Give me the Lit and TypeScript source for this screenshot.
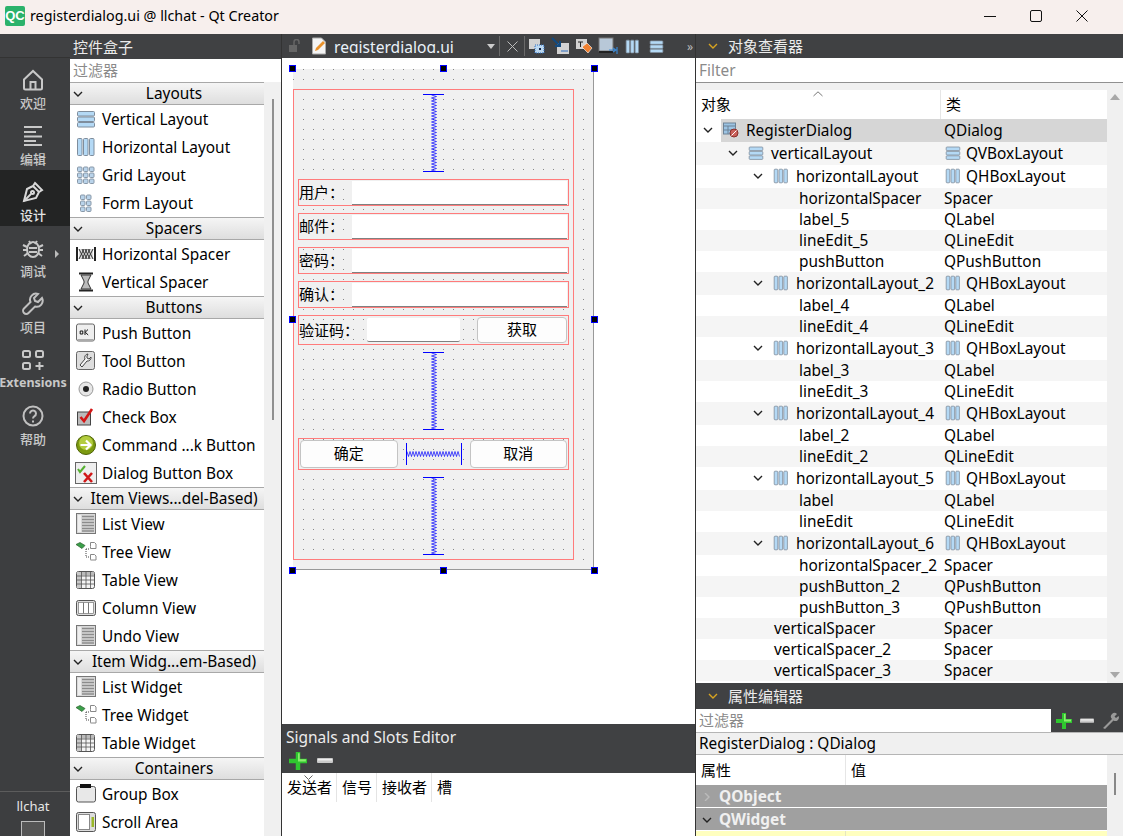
import { css, html, LitElement, svg } from "lit";
import { customElement } from "lit/decorators.js";

// ---- icons ----
const vbox = (s = 20) => html`<svg width="${s}" height="${s}" viewBox="0 0 20 20">
  <rect x="1.5" y="2.5" width="17" height="4.5" rx="1" fill="#b4d9f5" stroke="#7f8d9c" />
  <rect x="1.5" y="8" width="17" height="4.5" rx="1" fill="#b4d9f5" stroke="#7f8d9c" />
  <rect x="1.5" y="13.5" width="17" height="4.5" rx="1" fill="#b4d9f5" stroke="#7f8d9c" />
</svg>`;
const hbox = (s = 20) => html`<svg width="${s}" height="${s}" viewBox="0 0 20 20">
  <rect x="1.5" y="1.5" width="4.5" height="17" rx="1" fill="#b4d9f5" stroke="#7f8d9c" />
  <rect x="7.5" y="1.5" width="4.5" height="17" rx="1" fill="#b4d9f5" stroke="#7f8d9c" />
  <rect x="13.5" y="1.5" width="4.5" height="17" rx="1" fill="#b4d9f5" stroke="#7f8d9c" />
</svg>`;
const cells = (cols: number[], rows: number[]) => html`<svg width="20" height="20" viewBox="0 0 20 20">
  ${rows.map((y) =>
    cols.map((x) => svg`<rect x="${x}" y="${y}" width="4.5" height="4.5" rx="1" fill="#b9d3ea" stroke="#8898a8" />`)
  )}
</svg>`;
const listIcon = () => html`<svg width="20" height="22" viewBox="0 0 20 22">
  <rect x=".5" y=".5" width="19" height="20" fill="#d9d9d9" stroke="#777" />
  <rect x="2" y="2" width="3" height="17" fill="#efefef" />
  <path d="M6 3.5h12M6 6.5h12M6 9.5h12M6 12.5h12M6 15.5h12M6 18h12" stroke="#8c8c8c" stroke-width="1.6" />
</svg>`;
const treeIcon = () => html`<svg width="22" height="20" viewBox="0 0 22 20">
  <path d="M1 2.5l4-2 5 3-3 3z" fill="#3aa04a" stroke="#2e5e2e" stroke-width=".7" />
  <path d="M11 7h4M11 7v8h4" stroke="#444" stroke-dasharray="1 1" fill="none" />
  <path d="M15.5 4.5V.5h4l1.5 1.5v4.5h-5.500zM15.500 17.500v-5h4l1.500 1.500v4h-5.500z" fill="#fff" stroke="#888" />
</svg>`;
const tableIcon = () => html`<svg width="20" height="20" viewBox="0 0 20 20">
  <rect x=".5" y="1.5" width="18" height="17" rx="2" fill="#f4f4f4" stroke="#555" />
  <rect x="1" y="2" width="17" height="3.500" fill="#bbb" />
  <rect x="1" y="2" width="4" height="16" fill="#c8c8c8" />
  <path d="M5.500 2v16M10 2v16M14.500 2v16M1 6h17M1 10h17M1 14h17" stroke="#555" stroke-width=".8" />
</svg>`;
const columnIcon = () => html`<svg width="20" height="20" viewBox="0 0 20 20">
  <rect x=".5" y="2.500" width="19" height="15" rx="2" fill="#ddd" stroke="#555" />
  <rect x="2.500" y="4.500" width="15" height="11" fill="#fff" stroke="#777" stroke-width=".7" />
  <path d="M7.500 4.500v11M12.500 4.500v11" stroke="#777" />
</svg>`;
const icons: Record<string, () => unknown> = {
  v: () => vbox(),
  h: () => hbox(),
  grid: () => cells([1.5, 7.5, 13.5], [2, 8, 14]),
  form: () => cells([4.5, 10.5], [2, 8, 14]),
  hspacer: () => html`<svg width="20" height="16" viewBox="0 0 20 16">
    <path d="M1 1v14M19 1v14" stroke="#222" stroke-width="2" />
    <path d="M3 3h14v10H3z" fill="#ddd" />
    <path d="M3 13l5-10M6 13l5-10M9 13l5-10M12 13l5-10M3 3l5 10M6 3l5 10M9 3l5 10M12 3l5 10" stroke="#333" stroke-width="1" />
  </svg>`,
  vspacer: () => html`<svg width="20" height="20" viewBox="0 0 20 20">
    <path d="M3 1.500h14M3 18.500h14" stroke="#222" stroke-width="2" />
    <path d="M5 3l10 0-3 6v2l3 6H5l3-6V9z" fill="#bbb" stroke="#333" stroke-width="1" />
  </svg>`,
  push: () => html`<svg width="20" height="20" viewBox="0 0 20 20">
    <rect x=".5" y="1" width="18" height="17" rx="2" fill="#eee" stroke="#666" />
    <rect x="1.500" y="16" width="16" height="2" fill="#aaa" />
    <path d="M4.200 8h2.600v3H4.200zM9 6.500V12M12 6.500 9.300 9.200 12.200 12" fill="none" stroke="#111" />
  </svg>`,
  tool: () => html`<svg width="20" height="20" viewBox="0 0 20 20">
    <rect x=".5" y=".5" width="18" height="18" rx="2" fill="#ddd" stroke="#666" />
    <path d="M12 3a3.500 3.500 0 0 0-3 5L4 14l2 2 5-6a3.500 3.500 0 0 0 4-4l-2 2-2-1V5z" fill="#f4f4f4" stroke="#444" />
  </svg>`,
  radio: () => html`<svg width="20" height="20" viewBox="0 0 20 20">
    <circle cx="10" cy="10" r="7" fill="#e6e6e6" stroke="#999" />
    <circle cx="10" cy="10" r="3" fill="#222" />
  </svg>`,
  check: () => html`<svg width="20" height="20" viewBox="0 0 20 20">
    <rect x="1.500" y="5" width="13" height="13" fill="#bbb" stroke="#444" />
    <path d="M4.500 10l3.500 4 8-12" fill="none" stroke="#d31616" stroke-width="2.600" />
  </svg>`,
  command: () => html`<svg width="20" height="20" viewBox="0 0 20 20">
    <circle cx="10" cy="10" r="9.500" fill="#7c9a10" stroke="#4f6408" />
    <circle cx="10" cy="8" r="7" fill="#b3cc3f" />
    <path d="M4.500 10h9M10 5.500l4.500 4.500-4.500 4.500" fill="none" stroke="#fff" stroke-width="2.200" />
  </svg>`,
  dialog: () => html`<svg width="22" height="22" viewBox="0 0 22 22">
    <rect x=".5" y=".5" width="21" height="21" fill="#eee" stroke="#666" />
    <path d="M3 7l2 3 5-6" fill="none" stroke="#55b030" stroke-width="2" />
    <path d="M9 11l8 9M17 11l-8 9" stroke="#d01818" stroke-width="2.600" />
  </svg>`,
  list: listIcon,
  tree: treeIcon,
  table: tableIcon,
  column: columnIcon,
  group: () => html`<svg width="20" height="20" viewBox="0 0 20 20">
    <rect x=".5" y="2.500" width="19" height="15.500" rx="2" fill="#e8e8e8" stroke="#555" />
    <rect x="4" y="0" width="11" height="4" fill="#111" />
  </svg>`,
  scroll: () => html`<svg width="20" height="20" viewBox="0 0 20 20">
    <rect x=".5" y=".5" width="19" height="19" rx="2" fill="#ddd" stroke="#555" />
    <rect x="2.500" y="2.500" width="11" height="15" fill="#fff" stroke="#888" />
    <rect x="15.500" y="5" width="2.500" height="10" fill="#9ab828" />
  </svg>`,
};

const chevron = (open = true, color = "#222") => html`<svg class="chev" width="10" height="8" viewBox="0 0 10 8">
  <path d="${open ? "M1 2l4 4 4-4" : "M3 0l4 4-4 4"}" fill="none" stroke="${color}" stroke-width="1.400" />
</svg>`;

const plus = (s = 16) => html`<svg width="${s}" height="${s}" viewBox="0 0 16 16">
  <path d="M6 0h4v6h6v4h-6v6H6v-6H0V6h6z" fill="#2fc72f" />
  <path d="M6.500 1h3v5.500H15v2H8V1z" fill="#8bee6e" />
</svg>`;
const minus = (w = 16) => html`<svg width="${w}" height="6" viewBox="0 0 16 6">
  <rect width="16" height="5" rx="1" fill="#c9c9c9" /><rect x="1" y="1" width="14" height="1.500" fill="#eee" />
</svg>`;

// ---- mode bar ----
const modeIcons: Record<string, unknown> = {
  home: html`<svg width="24" height="24" viewBox="0 0 24 24" fill="none" stroke="#c8c8c8" stroke-width="2">
    <path d="M3 11.500 12 3l9 8.500V20a1.500 1.500 0 0 1-1.500 1.500h-15A1.500 1.500 0 0 1 3 20z" /><path d="M9.500 21.500V14h5v7.500" />
  </svg>`,
  edit: html`<svg width="24" height="24" viewBox="0 0 24 24" stroke="#c8c8c8" stroke-width="1.800">
    <path d="M3 3h18M3 8h12M3 12.500h18M3 17h12M3 21h18" />
  </svg>`,
  pen: html`<svg width="24" height="24" viewBox="0 0 24 24" fill="none" stroke="#d8d8d8" stroke-width="2">
    <path d="M14 3l7 7-3 2-6-6zM12 6 6 9l-3 12 12-3 3-6" /><path d="M3 21l7-7" /><circle cx="11.500" cy="12.500" r="1.500" />
  </svg>`,
  bug: html`<svg width="24" height="24" viewBox="0 0 24 24" fill="none" stroke="#c8c8c8" stroke-width="2">
    <ellipse cx="12" cy="13.500" rx="6" ry="7.500" /><path d="M8 5l2 3M16 5l-2 3M2 9l4 2M22 9l-4 2M2 14h4M22 14h-4M3 20l4-3M21 20l-4-3M8 12h8M8 16h8" />
  </svg>`,
  wrench: html`<svg width="24" height="24" viewBox="0 0 24 24" fill="none" stroke="#c0c0c0" stroke-width="2">
    <path d="M21 6l-4 4-3-1-1-3 4-4a6 6 0 0 0-7.500 8L3 16.500a3 3 0 0 0 4.500 4.500l6.500-6.500A6 6 0 0 0 21 6z" />
  </svg>`,
  ext: html`<svg width="24" height="24" viewBox="0 0 24 24" fill="none" stroke="#c8c8c8" stroke-width="2">
    <rect x="2" y="3" width="7" height="6" rx="1.500" /><rect x="15" y="3" width="7" height="6" rx="1.500" />
    <rect x="2" y="15" width="7" height="6" rx="1.500" /><path d="M18.500 14v8M14.500 18h8" />
  </svg>`,
  help: html`<svg width="24" height="24" viewBox="0 0 24 24" fill="none" stroke="#c0c0c0" stroke-width="2">
    <circle cx="12" cy="12" r="9.500" /><path d="M9 9.500a3 3 0 1 1 4.500 2.600c-1 .6-1.500 1.200-1.500 2.400M12 16.500v2" />
  </svg>`,
};
const modes = [
  ["home", "欢迎"],
  ["edit", "编辑"],
  ["pen", "设计"],
  ["bug", "调试"],
  ["wrench", "项目"],
  ["ext", "Extensions"],
  ["help", "帮助"],
];

// ---- widget box ----
const sections: [string, [string, string][]][] = [
  ["Layouts", [["v", "Vertical Layout"], ["h", "Horizontal Layout"], ["grid", "Grid Layout"], ["form", "Form Layout"]]],
  ["Spacers", [["hspacer", "Horizontal Spacer"], ["vspacer", "Vertical Spacer"]]],
  ["Buttons", [["push", "Push Button"], ["tool", "Tool Button"], ["radio", "Radio Button"], ["check", "Check Box"], ["command", "Command ...k Button"], ["dialog", "Dialog Button Box"]]],
  ["Item Views...del-Based)", [["list", "List View"], ["tree", "Tree View"], ["table", "Table View"], ["column", "Column View"], ["list", "Undo View"]]],
  ["Item Widg...em-Based)", [["list", "List Widget"], ["tree", "Tree Widget"], ["table", "Table Widget"]]],
  ["Containers", [["group", "Group Box"], ["scroll", "Scroll Area"]]],
];

// ---- object tree: depth, name, class, icon ----
const tree: [number, string, string, string][] = [
  [0, "RegisterDialog", "QDialog", "d"],
  [1, "verticalLayout", "QVBoxLayout", "v"],
  [2, "horizontalLayout", "QHBoxLayout", "h"],
  [3, "horizontalSpacer", "Spacer", ""],
  [3, "label_5", "QLabel", ""],
  [3, "lineEdit_5", "QLineEdit", ""],
  [3, "pushButton", "QPushButton", ""],
  [2, "horizontalLayout_2", "QHBoxLayout", "h"],
  [3, "label_4", "QLabel", ""],
  [3, "lineEdit_4", "QLineEdit", ""],
  [2, "horizontalLayout_3", "QHBoxLayout", "h"],
  [3, "label_3", "QLabel", ""],
  [3, "lineEdit_3", "QLineEdit", ""],
  [2, "horizontalLayout_4", "QHBoxLayout", "h"],
  [3, "label_2", "QLabel", ""],
  [3, "lineEdit_2", "QLineEdit", ""],
  [2, "horizontalLayout_5", "QHBoxLayout", "h"],
  [3, "label", "QLabel", ""],
  [3, "lineEdit", "QLineEdit", ""],
  [2, "horizontalLayout_6", "QHBoxLayout", "h"],
  [3, "horizontalSpacer_2", "Spacer", ""],
  [3, "pushButton_2", "QPushButton", ""],
  [3, "pushButton_3", "QPushButton", ""],
  [2, "verticalSpacer", "Spacer", ""],
  [2, "verticalSpacer_2", "Spacer", ""],
  [2, "verticalSpacer_3", "Spacer", ""],
];

const dialogIcon = html`<svg width="16" height="16" viewBox="0 0 16 16">
  <rect x=".5" y="1" width="12" height="11" fill="#9cc4e4" stroke="#6d8296" />
  <path d="M.5 4h12M5 4v8M.5 8h12" stroke="#6d8296" />
  <circle cx="11" cy="11" r="4" fill="#c9605a" stroke="#8a2f2a" /><path d="M8.500 13.500l5-5" stroke="#fff" />
</svg>`;

const vSpring = () => {
  let d = "M8.500 1";
  for (let i = 1; i < 52; i++) d += `L${i % 2 ? 13.5 : 8.5} ${1 + i * 1.5}`;
  return html`<svg width="21" height="78" viewBox="0 0 21 78">
    <path d="M0 .5h21M0 77.500h21" stroke="#00f" />
    <path d="${d}" fill="none" stroke="#00f" stroke-width=".7" />
  </svg>`;
};
const hSpring = () => {
  let d = "M1 8.500";
  for (let i = 1; i < 36; i++) d += `L${1 + i * 1.5} ${i % 2 ? 13.5 : 8.5}`;
  return html`<svg width="56" height="22" viewBox="0 0 56 22">
    <path d="M.5 0v22M55.500 0v22" stroke="#00f" />
    <path d="${d}" fill="none" stroke="#00f" stroke-width=".7" />
  </svg>`;
};

@customElement("app-root")
export class AppRoot extends LitElement {
  static styles = css`
    :host {
      display: block;
      width: 1123px;
      height: 836px;
      overflow: hidden;
      background: #fff;
      font-family: "Noto Sans", "Noto Sans CJK SC", sans-serif;
      font-size: 15.4px;
      color: #000;
      --dark: #404143;
    }
    svg {
      display: block;
      flex: none;
    }

    .titlebar {
      height: 34px;
      box-sizing: border-box;
      background: #f7efed;
      display: flex;
      align-items: center;
      padding: 0 0 3px 5px;
    }
    .qc {
      width: 20px;
      height: 20px;
      border-radius: 2px;
      background: #2bb26b;
      color: #fff;
      font: bold 13px/20px "Liberation Sans", sans-serif;
      text-align: center;
      margin-right: 5px;
    }
    .title {
      flex: 1;
      font-size: 14.3px;
    }
    .win {
      display: flex;
      margin-right: 35px;
      gap: 34px;
    }

    .main {
      display: flex;
      height: 802px;
    }

    .modebar {
      width: 70px;
      background: #3d3e40;
      display: flex;
      flex-direction: column;
      flex: none;
    }
    .modetop {
      height: 23px;
      background: var(--dark);
      border-bottom: 1px solid #333;
    }
    .mode {
      height: 56px;
      display: flex;
      flex-direction: column;
      align-items: center;
      padding: 10px 4px 0 0;
      box-sizing: border-box;
      color: #c8c8c8;
      font-size: 13px;
      font-weight: 500;
      line-height: 20px;
      position: relative;
      white-space: nowrap;
    }
    .mode.on {
      background: #232424;
      color: #e4e4e4;
    }
    .mode b {
      font-size: 12.5px;
    }
    .mode svg {
      margin-bottom: 1px;
    }
    .arrow {
      position: absolute;
      left: 55px;
      top: 24px;
      border-left: 4px solid #bbb;
      border-top: 4px solid transparent;
      border-bottom: 4px solid transparent;
    }
    .spring {
      flex: 1;
    }
    .kit {
      border-top: 1px solid #5c5c5c;
      height: 45px;
      text-align: center;
      color: #e6e6e6;
      font-size: 13px;
      padding: 5px 4px 0 0;
      box-sizing: border-box;
    }
    .kit i {
      display: block;
      width: 22px;
      height: 20px;
      margin: 6px auto 0;
      border: 1.500px solid #bbb;
      background: #555;
    }

    .box {
      width: 211px;
      flex: none;
      display: flex;
      flex-direction: column;
    }
    .dockhead {
      height: 24px;
      background: var(--dark);
      color: #ececec;
      font-size: 15px;
      line-height: 24px;
      display: flex;
      align-items: center;
      white-space: nowrap;
    }
    .box .dockhead {
      height: 25px;
      padding-left: 3px;
    }
    .filter {
      height: 23px;
      line-height: 23px;
      padding-left: 3px;
      background: #fff;
      color: #8a8a8a;
      font-size: 15px;
    }
    .boxbody {
      flex: 1;
      display: flex;
      min-height: 0;
    }
    .cats {
      width: 194px;
      flex: none;
    }
    .cat {
      height: 21px;
      border-top: 1px solid #a8a8a8;
      border-bottom: 1px solid #a8a8a8;
      background: linear-gradient(#f5f5f5, #dedede);
      display: flex;
      align-items: center;
      justify-content: center;
      padding-left: 14px;
      position: relative;
      line-height: 21px;
      white-space: nowrap;
    }
    .cat .chev {
      position: absolute;
      left: 3px;
      top: 7px;
    }
    .item {
      height: 28px;
      display: flex;
      align-items: center;
      white-space: nowrap;
    }
    .ic {
      width: 22px;
      margin: 0 5px;
      display: flex;
      justify-content: center;
    }
    .bar {
      flex: 1;
      background: #f0f0f0;
      position: relative;
    }
    .thumb {
      position: absolute;
      left: 8px;
      top: 17px;
      width: 2px;
      height: 321px;
      background: #8f8f8f;
    }

    .center {
      width: 415px;
      flex: none;
      display: flex;
      flex-direction: column;
      border-left: 1px solid #333;
      border-right: 1px solid #333;
      box-sizing: border-box;
    }
    .tabs {
      height: 24px;
      background: var(--dark);
      display: flex;
      align-items: center;
      color: #eaf2fa;
      flex: none;
      overflow: hidden;
    }
    .tabs > * {
      flex: none;
    }
    .tabs .lock {
      margin: 0 9px 0 6px;
    }
    .fname {
      width: 150px;
      margin: 5px 0 0 7px;
      height: 14px;
      line-height: 16px;
      font-size: 15.600px;
      overflow: hidden;
      align-self: flex-start;
    }
    .drop {
      border-top: 5px solid #ccc;
      border-left: 4px solid transparent;
      border-right: 4px solid transparent;
      margin: 0 4px 0 3px;
    }
    .vsep {
      width: 1px;
      height: 20px;
      background: #6a6a6a;
    }
    .xclose {
      margin: 0 6px 0 7px;
    }
    .tool {
      margin-left: 4px;
      width: 20px;
      display: flex;
      justify-content: center;
    }
    .vsep + .tool {
      margin-left: 1px;
    }
    .more {
      margin-left: 21px;
      color: #bbb;
      font-size: 12px;
    }
    .canvas {
      flex: 1;
      background: #fff;
      padding: 11px 0 0 11px;
      min-height: 0;
    }

    .form {
      width: 301px;
      height: 501px;
      box-sizing: border-box;
      position: relative;
      padding-top: 20px;
      border-right: 1px solid #999;
      border-bottom: 1px solid #999;
      background-color: #f0f0f0;
      background-image: conic-gradient(from 0deg at 1px 1px, transparent 75%, #888 0);
      background-size: 10px 10px;
      font-size: 15px;
    }
    .handle {
      position: absolute;
      width: 5px;
      height: 5px;
      background: #000;
      border: 1px solid #00f;
    }
    .vlayout {
      width: 281px;
      height: 471px;
      box-sizing: border-box;
      border: 1px solid #ff7b7b;
      padding: 0 3px 0 4px;
      display: flex;
      flex-direction: column;
      gap: 7px;
    }
    .vs {
      display: flex;
      justify-content: center;
      height: 78px;
      flex: none;
      padding-right: 2px;
    }
    .vs.first {
      height: 82px;
      padding-top: 4px;
      box-sizing: border-box;
    }
    .vs.second {
      height: 79px;
    }
    .row {
      width: 271px;
      height: 27px;
      box-sizing: border-box;
      border: 1px solid #ff7b7b;
      display: flex;
      align-items: flex-end;
      flex: none;
      font-size: 15px;
      padding-right: 1px;
    }
    .row.tall {
      height: 30px;
      align-items: center;
    }
    .row.btns {
      height: 32px;
      align-items: center;
      padding-left: 1px;
    }
    .lab {
      width: 53px;
      align-self: center;
      white-space: nowrap;
      margin-bottom: 2px;
    }
    .tall .lab {
      width: 68px;
    }
    .edit {
      flex: 1;
      height: 24px;
      background: #fff;
      border-bottom: 1px solid #808080;
      box-sizing: border-box;
    }
    .tall .edit {
      flex: none;
      width: 93px;
      border-radius: 2px;
    }
    .btn {
      height: 26px;
      box-sizing: border-box;
      border: 1px solid #c4c4c4;
      border-radius: 4px;
      background: #fdfdfd;
      text-align: center;
      line-height: 22px;
      width: 90px;
      margin-left: 17px;
    }
    .btns .btn {
      height: 28px;
      width: 99px;
      margin-left: 0;
      line-height: 25px;
    }
    .btns svg {
      margin: 0 8px;
    }

    .signals {
      height: 112px;
      flex: none;
    }
    .sighead {
      height: 49px;
      background: var(--dark);
      color: #ececec;
      font-size: 15.500px;
      padding: 3px 0 0 4px;
      box-sizing: border-box;
      line-height: 21px;
    }
    .sigtools {
      display: flex;
      align-items: center;
      gap: 9px;
      margin-top: 4px;
      padding-left: 3px;
    }
    .sigcols {
      display: flex;
      height: 29px;
      line-height: 29px;
      position: relative;
      font-size: 15px;
    }
    .sigcols span {
      padding: 0 4px 0 5px;
      border-right: 1px solid #e4e4e4;
      white-space: nowrap;
    }
    .sigcols span:last-of-type {
      border: 0;
    }
    .caret {
      position: absolute;
      top: 2px;
      left: 22px;
    }

    .right {
      flex: 1;
      display: flex;
      flex-direction: column;
      min-width: 0;
      background: #f0f0f0;
    }
    .right .dockhead {
      padding-left: 12px;
      gap: 10px;
      flex: none;
    }
    .ofilter {
      height: 24px;
      line-height: 26px;
      background: #fff;
      color: #8a8a8a;
      border-bottom: 1px solid #909090;
      padding-left: 3px;
      flex: none;
    }
    .treewrap {
      display: flex;
      height: 600px;
      flex: none;
      padding-top: 7px;
      box-sizing: border-box;
    }
    .treebody {
      width: 411px;
      flex: none;
      background: #fff;
    }
    .thead {
      height: 29px;
      display: flex;
      line-height: 28px;
      position: relative;
      font-size: 15px;
    }
    .thead .c1 {
      width: 245px;
      padding-left: 5px;
      box-sizing: border-box;
      border-right: 1px solid #e6e6e6;
    }
    .thead .c2 {
      padding-left: 5px;
    }
    .thead svg {
      position: absolute;
      top: 1px;
      left: 117px;
    }
    .tr {
      display: flex;
      align-items: center;
      height: 21px;
      white-space: nowrap;
      box-sizing: border-box;
      padding-bottom: 1px;
    }
    .tr.tall {
      height: 23px;
    }
    .tr.alt {
      background: #f5f5f5;
    }
    .tr.sel {
      background: linear-gradient(to right, transparent 25px, #d6d6d6 25px);
    }
    .t1 {
      width: 245px;
      display: flex;
      align-items: center;
      flex: none;
      box-sizing: border-box;
    }
    .t1 .chev {
      margin-right: 10px;
    }
    .t1 svg + svg {
      margin-right: 7px;
    }
    .t2 {
      display: flex;
      align-items: center;
      padding-left: 3px;
    }
    .t2 svg {
      margin: 0 5px 0 1px;
    }
    .sb {
      flex: 1;
      display: flex;
      flex-direction: column;
      justify-content: space-between;
      align-items: center;
      padding: 4px 0 5px;
    }
    .up {
      border-bottom: 6px solid #a8a8a8;
      border-left: 5px solid transparent;
      border-right: 5px solid transparent;
    }
    .down {
      border-top: 6px solid #a8a8a8;
      border-left: 5px solid transparent;
      border-right: 5px solid transparent;
    }
    .dockhead.prop {
      height: 26px;
    }
    .pfilter {
      display: flex;
      height: 23px;
      background: var(--dark);
      flex: none;
    }
    .pfilter .f {
      width: 355px;
      background: #fff;
      color: #8a8a8a;
      line-height: 23px;
      padding-left: 3px;
      font-size: 15px;
      box-sizing: border-box;
    }
    .ptools {
      display: flex;
      align-items: center;
      gap: 8px;
      padding-left: 5px;
    }
    .pclass {
      height: 23px;
      line-height: 21px;
      box-sizing: border-box;
      border-top: 1px solid #b5b5b5;
      border-bottom: 1px solid #b5b5b5;
      padding-left: 3px;
      flex: none;
    }
    .pbody {
      flex: 1;
      display: flex;
      min-height: 0;
    }
    .ptable {
      width: 411px;
      flex: none;
      background: #fff;
    }
    .phead {
      height: 30px;
      line-height: 30px;
      display: flex;
      font-size: 15px;
    }
    .phead span:first-child {
      width: 150px;
      padding-left: 5px;
      box-sizing: border-box;
      border-right: 1px solid #e6e6e6;
    }
    .phead span:last-child {
      padding-left: 5px;
    }
    .group {
      height: 22px;
      box-sizing: border-box;
      margin-bottom: 1px;
      background: #a0a0a0;
      color: #f0f0f0;
      font-weight: 700;
      display: flex;
      align-items: center;
      padding: 2px 0 0 6px;
      gap: 7px;
      line-height: 20px;
    }
    .yellow {
      height: 6px;
      background: linear-gradient(to right, #ffffbf 149px, #e6e6c0 149px, #e6e6c0 150px, #ffffbf 150px);
    }
    .pbar {
      flex: 1;
      position: relative;
    }
    .pbar i {
      position: absolute;
      left: 7px;
      top: 18px;
      width: 2px;
      height: 22px;
      background: #888;
    }
  `;

  private renderToolIcon(kind: number) {
    const shapes = [
      svg`<rect x="3" y="3" width="11" height="10" fill="#d2d2d2" /><rect x="9" y="9" width="9" height="8" fill="#bcd8f0" stroke="#2f6fc0" stroke-dasharray="1 1" /><rect x="13" y="12" width="2" height="2" fill="#124" />`,
      svg`<rect x="7" y="7" width="12" height="11" fill="#d2d2d2" /><path d="M2 2l8 8M10 5v5H5" fill="none" stroke="#124a80" stroke-width="2" /><path d="M11 15h7" stroke="#2f6fc0" />`,
      svg`<rect x="2" y="3" width="11" height="10" fill="#d2d2d2" /><path d="M4 6h5M6.500 6v5" stroke="#222" /><path d="M8 11l5-4 5 5-4 5z" fill="#f08030" stroke="#fff" stroke-width=".6" />`,
      svg`<rect x="1" y="2" width="14" height="13" fill="#b8c8d8" stroke="#777" /><rect x="1" y="15" width="14" height="2" fill="#222" /><path d="M11 14h6M15 12l3 2-3 2M19 11v7" fill="none" stroke="#3a86d0" stroke-width="1.200" />`,
    ];
    return html`<svg class="tool" width="20" height="20" viewBox="0 0 20 20">${shapes[kind]}</svg>`;
  }

  private renderModes() {
    return modes.map(
      ([icon, label], i) => html`<div class="mode ${i === 2 ? "on" : ""}">
        ${modeIcons[icon]}${icon === "ext" ? html`<b>${label}</b>` : label}
        ${icon === "bug" ? html`<div class="arrow"></div>` : ""}
      </div>`
    );
  }

  private renderBox() {
    return html`<div class="box">
      <div class="dockhead">控件盒子</div>
      <div class="filter">过滤器</div>
      <div class="boxbody">
        <div class="cats">
          ${sections.map(
            ([name, items]) => html`<div class="cat">${chevron()}${name}</div>
              ${items.map(
                ([icon, label]) => html`<div class="item"><div class="ic">${icons[icon]()}</div>${label}</div>`
              )}`
          )}
        </div>
        <div class="bar"><div class="thumb"></div></div>
      </div>
    </div>`;
  }

  private renderForm() {
    const handles = [
      [-4, -4], [147, -4], [298, -4], [-4, 247], [298, 247], [-4, 498], [147, 498], [298, 498],
    ];
    const field = (label: string) =>
      html`<div class="row"><div class="lab">${label}</div><div class="edit"></div></div>`;
    return html`<div class="form">
      <div class="vlayout">
        <div class="vs first">${vSpring()}</div>
        ${field("用户：")}${field("邮件：")}${field("密码：")}${field("确认：")}
        <div class="row tall">
          <div class="lab">验证码：</div><div class="edit"></div><div class="btn">获取</div>
        </div>
        <div class="vs second">${vSpring()}</div>
        <div class="row btns">
          <div class="btn">确定</div>${hSpring()}<div class="btn">取消</div>
        </div>
        <div class="vs">${vSpring()}</div>
      </div>
      ${handles.map(([x, y]) => html`<div class="handle" style="left:${x}px;top:${y}px"></div>`)}
    </div>`;
  }

  private renderCenter() {
    return html`<div class="center">
      <div class="tabs">
        <svg class="lock" width="14" height="14" viewBox="0 0 14 14" fill="none">
          <rect x="1" y="6" width="8" height="7" fill="#666" />
          <path d="M6 6V3a2.500 2.500 0 0 1 5 0v2" stroke="#666" stroke-width="1.500" />
        </svg>
        <svg width="16" height="18" viewBox="0 0 16 18">
          <path d="M1.500 1h9l4 4v12h-13z" fill="#f4f4f4" stroke="#aaa" />
          <path d="M4 14l1-3 7-7 2 2-7 7z" fill="#e8912c" />
        </svg>
        <div class="fname">registerdialog.ui</div>
        <div class="drop"></div>
        <div class="vsep"></div>
        <svg class="xclose" width="11" height="11" viewBox="0 0 11 11"><path d="M.5.5l10 10M10.500.5l-10 10" stroke="#bbb" /></svg>
        <div class="vsep"></div>
        ${[0, 1, 2, 3].map((k) => this.renderToolIcon(k))}
        <div class="tool">${hbox(15)}</div>
        <div class="tool">${vbox(15)}</div>
        <div class="more">»</div>
      </div>
      <div class="canvas">${this.renderForm()}</div>
      <div class="signals">
        <div class="sighead">
          Signals and Slots Editor
          <div class="sigtools">${plus(18)}${minus(18)}</div>
        </div>
        <div class="sigcols">
          <span>发送者</span><span>信号</span><span>接收者</span><span>槽</span>
          <svg class="caret" width="9" height="5" viewBox="0 0 9 5"><path d="M.5.500l4 4 4-4" fill="none" stroke="#666" /></svg>
        </div>
      </div>
    </div>`;
  }

  private renderTree() {
    return tree.map(([depth, name, cls, icon], i) => {
      const rowClass = `tr ${icon ? "tall" : ""} ${i === 0 ? "sel" : i % 2 ? "alt" : ""}`;
      const pad = icon ? 7 + 25 * depth : 28 + 25 * depth;
      const kind = icon === "d" ? dialogIcon : icon === "v" ? vbox(16) : hbox(16);
      return html`<div class="${rowClass}">
        <div class="t1" style="padding-left:${pad}px">
          ${icon ? html`${chevron()}${kind}` : ""}${name}
        </div>
        <div class="t2">${icon === "v" || icon === "h" ? kind : ""}${cls}</div>
      </div>`;
    });
  }

  private renderRight() {
    return html`<div class="right">
      <div class="dockhead">${chevron(true, "#d9a520")}<span>对象查看器</span></div>
      <div class="ofilter">Filter</div>
      <div class="treewrap">
        <div class="treebody">
          <div class="thead">
            <div class="c1">对象</div>
            <div class="c2">类</div>
            <svg width="10" height="6" viewBox="0 0 10 6"><path d="M.5 5 5 .8 9.500 5" fill="none" stroke="#777" /></svg>
          </div>
          ${this.renderTree()}
        </div>
        <div class="sb"><div class="up"></div><div class="down"></div></div>
      </div>
      <div class="dockhead prop">${chevron(true, "#d9a520")}<span>属性编辑器</span></div>
      <div class="pfilter">
        <div class="f">过滤器</div>
        <div class="ptools">
          ${plus(16)}${minus(14)}
          <svg width="18" height="18" viewBox="0 0 18 18"><path d="M1 16 10 7a3.500 3.500 0 0 1 5-5l-2.500 2.500 1.500 1.500L16.500 4A3.500 3.500 0 0 1 11.500 8.500L3 17z" fill="#999" /></svg>
        </div>
      </div>
      <div class="pclass">RegisterDialog : QDialog</div>
      <div class="pbody">
        <div class="ptable">
          <div class="phead"><span>属性</span><span>值</span></div>
          <div class="group">${chevron(false, "#bbb")}QObject</div>
          <div class="group">${chevron(true, "#222")}QWidget</div>
          <div class="yellow"></div>
        </div>
        <div class="pbar"><i></i></div>
      </div>
    </div>`;
  }

  render() {
    return html`
      <div class="titlebar">
        <div class="qc">QC</div>
        <div class="title">registerdialog.ui @ llchat - Qt Creator</div>
        <div class="win">
          <svg width="12" height="12" viewBox="0 0 12 12"><path d="M0 6.500h12" stroke="#111" /></svg>
          <svg width="12" height="12" viewBox="0 0 12 12"><rect x=".5" y=".5" width="11" height="11" rx="1.500" fill="none" stroke="#111" /></svg>
          <svg width="12" height="12" viewBox="0 0 12 12"><path d="M.5.5l11 11M11.500.5l-11 11" stroke="#111" /></svg>
        </div>
      </div>
      <div class="main">
        <div class="modebar">
          <div class="modetop"></div>
          ${this.renderModes()}
          <div class="spring"></div>
          <div class="kit">llchat<i></i></div>
        </div>
        ${this.renderBox()} ${this.renderCenter()} ${this.renderRight()}
      </div>
    `;
  }
}
